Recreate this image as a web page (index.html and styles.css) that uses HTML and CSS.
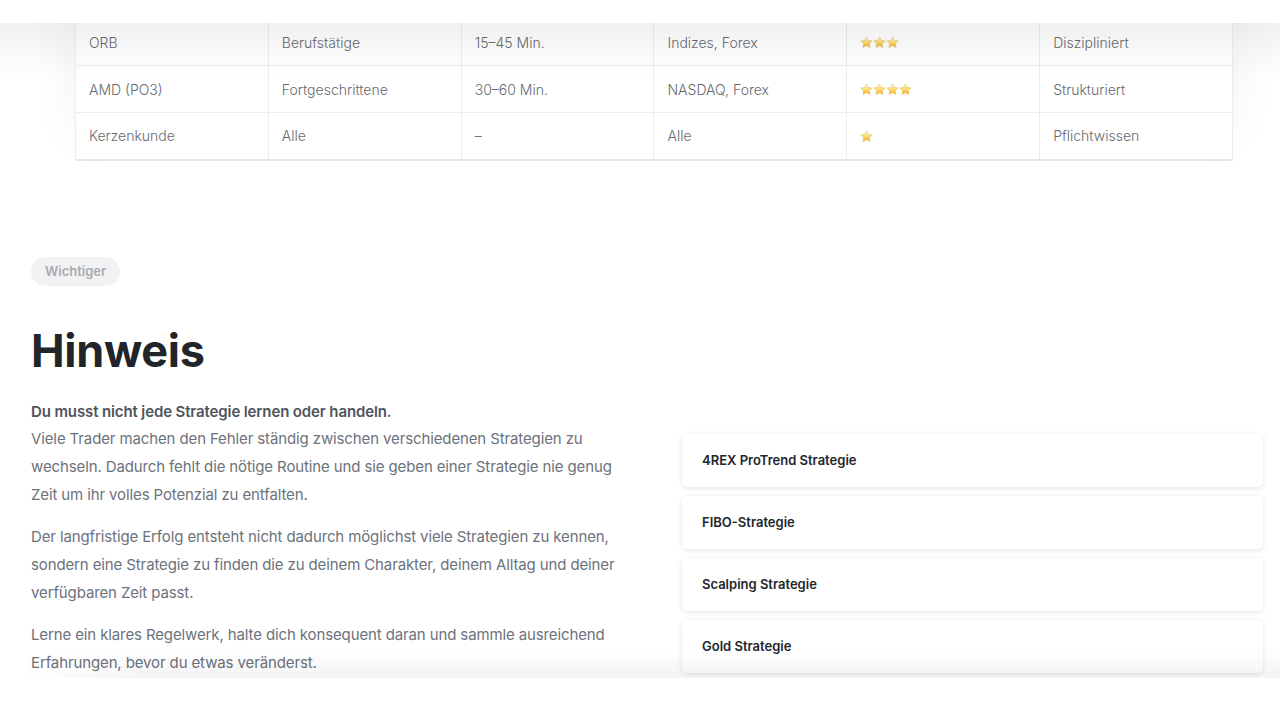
FILE: index.html
```html
<!DOCTYPE html>
<html lang="de">
<head>
  <meta charset="UTF-8">
  <title>Strategien – Hinweis</title>
  <link rel="stylesheet" href="styles.css">
</head>
<body>
  <div class="top-strip"></div>
  <div class="top-shade"></div>

  <div class="table-wrap">
    <table class="strat-table">
      <tbody>
        <tr>
          <td>ORB</td><td>Berufstätige</td><td>15–45 Min.</td><td>Indizes, Forex</td>
          <td><span class="stars" data-n="3"></span></td><td>Diszipliniert</td>
        </tr>
        <tr>
          <td>AMD (PO3)</td><td>Fortgeschrittene</td><td>30–60 Min.</td><td>NASDAQ, Forex</td>
          <td><span class="stars" data-n="4"></span></td><td>Strukturiert</td>
        </tr>
        <tr>
          <td>Kerzenkunde</td><td>Alle</td><td>–</td><td>Alle</td>
          <td><span class="stars" data-n="1"></span></td><td>Pflichtwissen</td>
        </tr>
      </tbody>
    </table>
  </div>

  <section class="note">
    <div class="note-text">
      <span class="badge">Wichtiger</span>
      <h2>Hinweis</h2>
      <p><strong>Du musst nicht jede Strategie lernen oder handeln.</strong><br>
        Viele Trader machen den Fehler ständig zwischen verschiedenen Strategien zu wechseln. Dadurch fehlt die nötige Routine und sie geben einer Strategie nie genug Zeit um ihr volles Potenzial zu entfalten.</p>
      <p>Der langfristige Erfolg entsteht nicht dadurch möglichst viele Strategien zu kennen, sondern eine Strategie zu finden die zu deinem Charakter, deinem Alltag und deiner verfügbaren Zeit passt.</p>
      <p>Lerne ein klares Regelwerk, halte dich konsequent daran und sammle ausreichend Erfahrungen, bevor du etwas veränderst.</p>
    </div>
    <div class="note-links">
      <a class="link-card" href="#">4REX ProTrend Strategie</a>
      <a class="link-card" href="#">FIBO-Strategie</a>
      <a class="link-card" href="#">Scalping Strategie</a>
      <a class="link-card" href="#">Gold Strategie</a>
    </div>
  </section>

  <div class="bottom-shade"></div>
  <div class="bottom-strip"></div>

  <script>
    const star = '<svg class="star" viewBox="0 0 24 24" width="13" height="13">' +
      '<defs><linearGradient id="sg" x1="0" y1="0" x2="0" y2="1">' +
      '<stop offset="0" stop-color="#fffbe0"/><stop offset="0.45" stop-color="#ffe27a"/><stop offset="1" stop-color="#f4a81c"/>' +
      '</linearGradient></defs>' +
      '<path d="M12 1.8l3.1 6.6 7.2.8-5.4 4.9 1.5 7.1L12 17.6l-6.4 3.6 1.5-7.1-5.4-4.9 7.2-.8z" fill="url(#sg)" stroke="#e6bf5a" stroke-width="1.2" stroke-linejoin="round"/>' +
      '</svg>';
    document.querySelectorAll('.stars').forEach(s => {
      s.innerHTML = star.repeat(+s.dataset.n);
    });
  </script>
</body>
</html>
```

FILE: styles.css
```css
html, body {
  margin: 0;
  background: #fff;
  overflow: hidden;
}
body {
  font-family: Inter, "Liberation Sans", sans-serif;
  color: #6c727c;
  height: 720px;
  position: relative;
}

/* overlays at the edges of the shot */
.top-strip {
  position: absolute;
  top: 0; left: 0; right: 0;
  height: 23px;
  background: #fff;
  z-index: 5;
}
.top-shade {
  position: absolute;
  top: 23px; left: 0; right: 0;
  height: 55px;
  background: linear-gradient(to bottom, rgba(0,0,0,0.06), rgba(0,0,0,0) 100%);
  z-index: 4;
  pointer-events: none;
}
.bottom-shade {
  position: absolute;
  top: 648px; left: 0; right: 0;
  height: 30px;
  background: linear-gradient(to top, rgba(0,0,0,0.045), rgba(0,0,0,0));
  -webkit-mask-image: linear-gradient(to right, transparent 20px, #000 140px);
  mask-image: linear-gradient(to right, transparent 20px, #000 140px);
  z-index: 4;
  pointer-events: none;
}
.bottom-strip {
  position: absolute;
  top: 678px; left: 0; right: 0; bottom: 0;
  background: #fff;
  z-index: 5;
}

/* table */
.table-wrap {
  margin: 18px 47px 0 75px;
  box-shadow: 0 -30px 50px rgba(0,0,0,0.06);
}
.strat-table {
  width: 100%;
  border-collapse: collapse;
  table-layout: fixed;
  background: #fff;
  border: 1px solid #e7e7e7;
  border-bottom-width: 2px;
}
.strat-table td {
  height: 47px;
  box-sizing: border-box;
  padding: 0 13px;
  border: 1px solid #ededed;
  font-size: 14px;
  font-weight: 300;
  color: #666a70;
  vertical-align: middle;
}
.stars {
  display: flex;
  padding-top: 1px;
}
.star { display: block; }

/* note section */
.note {
  display: grid;
  grid-template-columns: 600px 1fr;
  column-gap: 51px;
  align-items: start;
  margin: 96px 17px 0 31px;
}
.badge {
  display: inline-block;
  padding: 0 14px;
  height: 29px;
  line-height: 29px;
  border-radius: 15px;
  background: #f2f2f3;
  color: #a7abb1;
  font-size: 13px;
  font-weight: 600;
}
.note h2 {
  margin: 42px 0 25px;
  font-size: 45px;
  line-height: 1;
  font-weight: 700;
  color: #212429;
  letter-spacing: -0.3px;
}
.note p {
  margin: 0 0 14.5px;
  font-size: 15px;
  line-height: 27.8px;
  letter-spacing: -0.12px;
}
.note p strong {
  font-weight: 600;
  color: #50555c;
}
.note-links {
  display: flex;
  flex-direction: column;
  gap: 9px;
  margin-top: 177px;
}
.link-card {
  display: flex;
  align-items: center;
  height: 53px;
  padding: 0 20px;
  border-radius: 5px;
  background: #fff;
  box-shadow: 0 1px 5px rgba(0,0,0,0.12);
  color: #23262b;
  font-size: 13px;
  font-weight: 600;
  text-decoration: none;
}
```
